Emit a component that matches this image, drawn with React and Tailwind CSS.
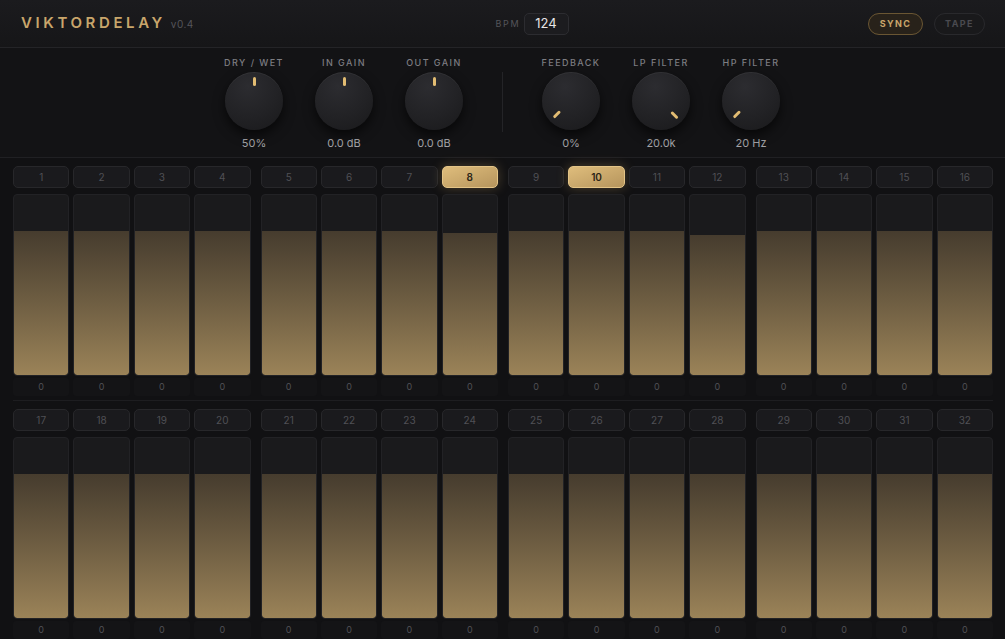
import React from "react";

const knobsA = [
  { label: "DRY / WET", value: "50%", angle: 0 },
  { label: "IN GAIN", value: "0.0 dB", angle: 0 },
  { label: "OUT GAIN", value: "0.0 dB", angle: 0 },
];
const knobsB = [
  { label: "FEEDBACK", value: "0%", angle: -135 },
  { label: "LP FILTER", value: "20.0k", angle: 135 },
  { label: "HP FILTER", value: "20 Hz", angle: -135 },
];

const levels = {
  8: 79,
  12: 78,
};
const active = [8, 10];

const Knob = ({ label, value, angle }) => (
  <div className="w-[90px] flex flex-col items-center">
    <div className="text-[9px] font-medium tracking-[0.16em] text-[#7d7d82] leading-none mt-[10px]">{label}</div>
    <div className="relative mt-[5px] w-[58px] h-[58px] rounded-full bg-[radial-gradient(circle_at_40%_25%,#2c2c30_0%,#222225_55%,#19191b_100%)] shadow-[0_5px_12px_rgba(0,0,0,0.65),inset_0_1px_0_rgba(255,255,255,0.05)]">
      <div className="absolute inset-0" style={{ transform: `rotate(${angle}deg)` }}>
        <div className="absolute left-1/2 top-[5px] -ml-[1.5px] w-[3px] h-[9px] rounded-full bg-[#e2bc72]" />
      </div>
    </div>
    <div className="mt-[8px] text-[11px] text-[#a3a3a7] leading-none">{value}</div>
  </div>
);

const Step = ({ n }) => {
  const on = active.includes(n);
  const level = levels[n] || 80;
  return (
    <div className="flex flex-col">
      <div
        className={
          on
            ? "h-[22px] rounded-[5px] flex items-center justify-center text-[10px] font-semibold text-[#2b2417] bg-linear-to-br from-[#dfbd7c] to-[#b6955d] border border-[#e3c487] shadow-[0_0_12px_rgba(212,175,110,0.3)]"
            : "h-[22px] rounded-[5px] flex items-center justify-center text-[10px] text-[#505055] bg-[#1a1a1d] border border-[#27272a]"
        }
      >
        {n}
      </div>
      <div className="mt-[6px] h-[182px] rounded-[4px] border border-[#222225] bg-[#1a1a1c] flex flex-col justify-end overflow-hidden">
        <div
          className="w-full rounded-b-[3px] bg-linear-to-b from-[#463c2e] to-[#9b8358]"
          style={{ height: `${level}%` }}
        />
      </div>
      <div className="mt-[2px] h-[18px] rounded-[3px] bg-[#141416] flex items-center justify-center text-[9px] text-[#505055]">
        0
      </div>
    </div>
  );
};

const Row = ({ start }) => (
  <div className="pt-[8px] pb-[4px] border-b border-[#1d1d20] grid grid-cols-4 gap-[10px]">
    {[0, 1, 2, 3].map((g) => (
      <div key={g} className="grid grid-cols-4 gap-[4px]">
        {[0, 1, 2, 3].map((i) => (
          <Step key={i} n={start + g * 4 + i} />
        ))}
      </div>
    ))}
  </div>
);

export default function App() {
  return (
    <div className="w-full h-[639px] overflow-hidden bg-[#121214] font-['Inter',sans-serif]">
      <header className="h-[48px] flex items-center justify-between pl-[21px] pr-[20px] border-b border-[#242427] bg-linear-to-b from-[#1b1b1e] to-[#161618]">
        <div className="w-[175px] flex items-baseline">
          <span className="text-[15px] font-semibold tracking-[0.24em] text-[#c9a66b]">VIKTORDELAY</span>
          <span className="ml-[5px] text-[10px] tracking-[0.05em] text-[#55555a]">v0.4</span>
        </div>
        <div className="w-[73px] flex items-center">
          <span className="text-[9px] tracking-[0.18em] text-[#55555a]">BPM</span>
          <div className="ml-auto w-[45px] h-[22px] rounded-[5px] bg-[#1c1c1f] border border-[#2c2c30] flex items-center justify-center text-[13px] text-[#e6e6e6]">
            124
          </div>
        </div>
        <div className="w-[117px] flex items-center gap-[11px]">
          <button className="w-[55px] h-[22px] rounded-full border border-[#6a5633] bg-[#28221a] text-[9px] font-bold tracking-[0.16em] text-[#c9a66b]">
            SYNC
          </button>
          <button className="w-[51px] h-[22px] rounded-full border border-[#29292c] bg-[#19191b] text-[9px] font-bold tracking-[0.16em] text-[#4a4a4f]">
            TAPE
          </button>
        </div>
      </header>

      <section className="h-[110px] flex justify-center border-b border-[#202023] bg-[#131315]">
        <div className="flex">
          {knobsA.map((k) => (
            <Knob key={k.label} {...k} />
          ))}
        </div>
        <div className="mx-[23px] mt-[24px] h-[60px] w-px bg-[#242427]" />
        <div className="flex">
          {knobsB.map((k) => (
            <Knob key={k.label} {...k} />
          ))}
        </div>
      </section>

      <section className="pl-[13px] pr-[12px] bg-[#111113]">
        <Row start={1} />
        <Row start={17} />
      </section>
    </div>
  );
}
